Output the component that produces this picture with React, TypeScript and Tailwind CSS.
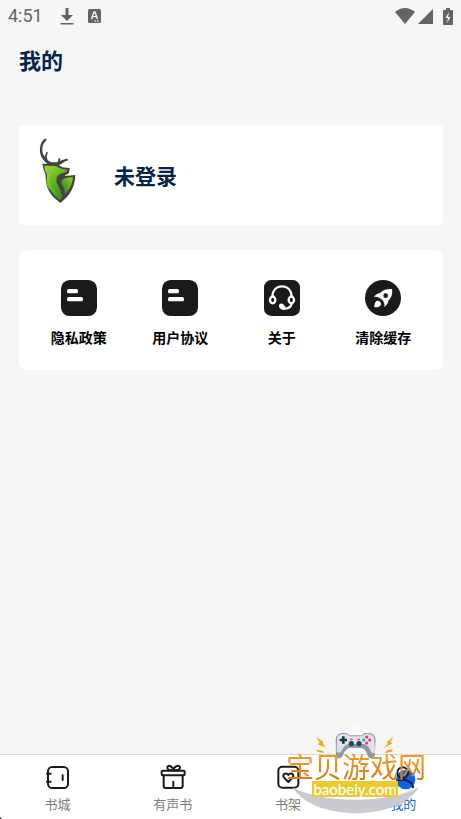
import type { ReactNode } from "react";

const actions = [
  { label: "隐私政策", icon: <DocIcon /> },
  { label: "用户协议", icon: <DocIcon /> },
  { label: "关于", icon: <HeadsetIcon /> },
  { label: "清除缓存", icon: <RocketIcon /> },
];

const tabs: { label: string; icon: ReactNode; active?: boolean }[] = [
  { label: "书城", icon: <BookIcon /> },
  { label: "有声书", icon: <GiftIcon /> },
  { label: "书架", icon: <HeartIcon /> },
  { label: "我的", icon: <UserIcon />, active: true },
];

function DocIcon() {
  return (
    <svg viewBox="0 0 108 108" className="size-9" aria-hidden="true">
      <rect width="108" height="108" rx="26" fill="#1a1a1a" />
      <rect x="18" y="27" width="33" height="13" rx="5" fill="#fff" />
      <rect x="18" y="51" width="48" height="13" rx="5" fill="#fff" />
    </svg>
  );
}

function HeadsetIcon() {
  return (
    <svg viewBox="0 0 108 108" className="size-9" aria-hidden="true">
      <rect width="108" height="108" rx="22" fill="#1a1a1a" />
      <g fill="none" stroke="#fff" strokeWidth="7" strokeLinecap="round">
        <path d="M25 50C26 30 38 19 54 19s28 11 29 31" />
        <ellipse cx="26" cy="60" rx="8" ry="10" />
        <ellipse cx="82" cy="60" rx="8" ry="10" />
        <path d="M83 71c-2 9-9 14-20 15" />
      </g>
      <path d="M45 77c0-6 9-9 13-4 2 3 2 5 7 7l-3 10c-10 0-17-6-17-13z" fill="#fff" />
    </svg>
  );
}

function RocketIcon() {
  return (
    <svg viewBox="0 0 108 108" className="size-9" aria-hidden="true">
      <circle cx="54" cy="54" r="54" fill="#1a1a1a" />
      <path d="M81 27c-16-1-27 2-36 12-7 1-14 5-19 12 7-1 12-1 16 2 8 3 13 8 15 15 2 4 2 8 0 13 8-5 12-11 13-19 10-9 13-20 11-35z" fill="#fff" />
      <circle cx="62" cy="47" r="7" fill="#1a1a1a" />
      <path d="M40 62c-9 0-12 7-12 20 12 0 20-3 20-11-1-5-4-8-8-9z" fill="#fff" />
    </svg>
  );
}

function BookIcon() {
  return (
    <svg viewBox="138 60 72 72" className="size-6 overflow-visible" fill="none" stroke="#1a1a1a" strokeWidth="6" strokeLinecap="round" aria-hidden="true">
      <rect x="144" y="66" width="60" height="63" rx="13" />
      <path d="M141 86h11M141 110h11M188 91v14" />
    </svg>
  );
}

function GiftIcon() {
  return (
    <svg viewBox="482 60 72 72" className="size-6 overflow-visible" fill="none" stroke="#1a1a1a" strokeWidth="6" strokeLinejoin="round" strokeLinecap="round" aria-hidden="true">
      <rect x="484" y="77" width="69" height="14" rx="3" />
      <path d="M490 92v30q0 7 7 7h43q7 0 7-7V92M519 110v18" />
      <path d="M519 76c-7 0-18-2-18-8 0-9 15-7 18 8 3-15 20-17 20-8 0 6-12 8-20 8z" />
    </svg>
  );
}

function HeartIcon() {
  return (
    <svg viewBox="18 136 72 72" className="size-6 overflow-visible" fill="none" stroke="#1a1a1a" strokeWidth="6" strokeLinejoin="round" aria-hidden="true">
      <rect x="25" y="141" width="60" height="63" rx="12" />
      <path d="M55 187L42 174c-7-9 6-18 13-8 7-10 20-1 13 8z" />
    </svg>
  );
}

function UserIcon() {
  return (
    <svg viewBox="366 135 72 72" className="size-6 overflow-visible" aria-hidden="true">
      <circle cx="410" cy="179" r="29" fill="#0b62ea" />
      <g fill="none" stroke="#16202e" strokeWidth="6" strokeLinecap="round">
        <circle cx="401" cy="158" r="16" />
        <path d="M372 202c2-30 56-30 60 0" />
      </g>
    </svg>
  );
}

function DeerLogo() {
  return (
    <svg viewBox="78 63 126 210" className="mb-2 h-[70px] w-[42px]" role="img" aria-label="avatar">
      <defs>
        <linearGradient id="deer" x1="0" y1="0" x2="0.7" y2="1">
          <stop offset="0" stopColor="#a4d72c" />
          <stop offset="0.5" stopColor="#6cbb22" />
          <stop offset="1" stopColor="#3c921e" />
        </linearGradient>
        <linearGradient id="flank" x1="1" y1="0" x2="0" y2="1">
          <stop offset="0" stopColor="#8fd02c" />
          <stop offset="1" stopColor="#237a25" />
        </linearGradient>
      </defs>
      <g fill="none" stroke="#434346" strokeLinecap="round">
        <path d="M106 74c-14 12-17 36-7 52 5 8 12 12 18 21" strokeWidth="7" />
        <path d="M111 113c-5 9-4 20 4 29" strokeWidth="5" />
        <path d="M171 134c-10 2-18 5-24 13M148 133c0 5-1 10-5 13" strokeWidth="6" />
        <path d="M98 124c6 10 14 19 24 22h22c6-2 10-4 14-7" strokeWidth="9" />
      </g>
      <path d="M97 146l44 1 16 10 22 2-2 15-14 9 33-3c-1 34-14 61-45 84-31-22-46-48-44-83l-6-17z" fill="#434346" />
      <path d="M103 152l34 1c9 5 17 10 35 11l-2 6-13 5c-14 2-20 13-17 25 3 14 12 21 13 34-7 3-22-1-32-9-14-11-17-29-5-46-8 0-11-9-13-27z" fill="url(#deer)" />
      <path d="M111 176c4 2 7 2 10 1-9 23 2 50 30 58 9 3 9 8-1 20-27-19-40-47-39-79z" fill="url(#deer)" />
      <path d="M160 192c9-4 18-5 29-5-2 20-11 38-24 52 0-12-2-21-9-30-4-7-3-13 4-17z" fill="url(#flank)" />
    </svg>
  );
}

function StatusBar() {
  return (
    <div className="flex h-8 items-center justify-between px-2 text-[#646464]">
      <div className="flex items-center">
        <span className="w-13 font-[Roboto] text-[18px] leading-8">4:51</span>
        <svg viewBox="0 0 14 17" className="h-[17px] w-[14px]" fill="currentColor" aria-hidden="true">
          <path d="M5.500 0h3v7H13L7 13 1 7h4.500zM.5 15h13v1.500H.5z" />
        </svg>
        <svg viewBox="0 0 13 14" className="ml-3.5 h-[14px] w-[13px]" aria-hidden="true">
          <rect width="13" height="14" rx="1.500" fill="currentColor" />
          <path d="M3.500 10l2.500-7h1l2.500 7M4.500 7.600h4M6.500 12h1.200M9 12h1.500" fill="none" stroke="#f5f5f5" strokeWidth="1.400" />
        </svg>
      </div>
      <div className="flex items-center" aria-hidden="true">
        <svg viewBox="0 0 20 16" className="h-4 w-5" fill="currentColor">
          <path d="M0 4Q10-4 20 4L10 16z" />
        </svg>
        <svg viewBox="0 0 15 15" className="ml-[3px] size-[15px]" fill="currentColor">
          <path d="M15 0v15H0z" />
        </svg>
        <svg viewBox="0 0 10 17" className="ml-2.5 h-[17px] w-2.5">
          <path d="M3 0h4v2h2q1 0 1 1v13q0 1-1 1H1q-1 0-1-1V3q0-1 1-1h2z" fill="currentColor" />
          <path d="M6 4L2.500 10H5l-1 5 3.500-6H5z" fill="#fff" />
        </svg>
      </div>
    </div>
  );
}

function SiteBadge() {
  return (
    <div className="pointer-events-none absolute bottom-[5px] right-[35px] h-[88px] w-[140px]">
      <svg viewBox="48 20 420 264" className="absolute inset-0 size-full overflow-visible" aria-hidden="true">
        <circle cx="257" cy="72" r="53" fill="#fff" opacity="0.35" />
        <path d="M68 204C155 254 355 254 447 204C385 308 130 308 68 204z" fill="#cacbd2" />
        <g fill="#f6a51c">
          <path d="M138 53l22 14-1 8 10 10-24-9 3-8zM138 92l17 1 9 8-20-3z" />
          <path d="M370 53l-19 15 2 6-13 12 26-13-4-6zM369 90l-18 3-6 8 20-4z" />
        </g>
        <path d="M197 61c1-18 17-22 34-19l8 6h36l8-6c18-3 32 1 34 19l-3 48c-2 11-17 11-21 0-5-15-10-22-19-23h-35c-10 2-15 9-21 24-5 10-19 9-20-1z" fill="#9297a8" />
        <path d="M201 57c2-13 17-15 30-12l9 6h35l9-6c15-3 27 1 29 14l2 40c-6 5-10 2-13-5-5-13-13-18-22-20h-43c-10 2-17 9-22 20-4 7-9 7-15 3z" fill="#dfe2ec" />
        <path d="M216 51h8v7h7v8h-7v7h-8v-7h-7v-8h7z" fill="#17364a" />
        <g fill="#29475a">
          <circle cx="244" cy="73" r="8" />
          <circle cx="267" cy="73" r="8" />
        </g>
        <path d="M240 58h8v5h-8zM262 58h8v5h-8z" fill="#e4506b" />
        <g fill="#e8394c">
          <circle cx="290" cy="53" r="4.500" />
          <circle cx="290" cy="71" r="4.500" />
          <circle cx="281" cy="62" r="4.500" fill="#2896ca" />
          <circle cx="299" cy="62" r="4.500" />
        </g>
      </svg>
      <div className="relative mt-[26px] whitespace-nowrap bg-linear-to-b from-[#f5a12a] to-[#dc7a14] bg-clip-text text-[28px] leading-7 text-transparent">
        宝贝游戏网
      </div>
      <div className="relative ml-[26px] mt-px h-4 w-[86px] bg-[#ebca2e] text-center font-[Lato] text-[15px] font-medium leading-4 text-white">
        baobeiy.com
      </div>
    </div>
  );
}

export default function App() {
  return (
    <div className="flex min-h-screen flex-col bg-[#f6f6f6] font-['Noto_Sans_CJK_SC',sans-serif] text-black">
      <StatusBar />
      <main className="flex-1 pl-[19px] pr-[18px]">
        <h1 className="mt-[9px] text-[22px] font-bold leading-9 text-[#05244c]">我的</h1>
        <section className="mt-12 flex h-[100px] items-center rounded bg-white pl-[17px]">
          <DeerLogo />
          <button className="ml-9 text-[21px] font-bold leading-8 text-[#05244c]">未登录</button>
        </section>
        <section className="mt-[25px] grid grid-cols-4 rounded-lg bg-white px-[9px] pb-[23px] pt-[30px]">
          {actions.map((a) => (
            <button key={a.label} className="flex flex-col items-center gap-[11px] text-[14px] font-bold leading-5">
              {a.icon}
              {a.label}
            </button>
          ))}
        </section>
      </main>
      <nav className="relative grid grid-cols-4 border-t border-[#d8d8d8] bg-white pb-1.5 pt-2.5">
        {tabs.map((t) => (
          <button
            key={t.label}
            className={`flex flex-col items-center gap-1.5 text-[13px] leading-[18px] ${t.active ? "text-[#1769c2]" : "text-[#7d7d7d]"}`}
          >
            {t.icon}
            {t.label}
          </button>
        ))}
        <svg viewBox="0 0 3 4" className="absolute bottom-0 left-0 h-1 w-[3px]" aria-hidden="true">
          <path d="M0 1q0 2 2 3H0z" fill="#1a1a1a" />
        </svg>
        <SiteBadge />
      </nav>
    </div>
  );
}
